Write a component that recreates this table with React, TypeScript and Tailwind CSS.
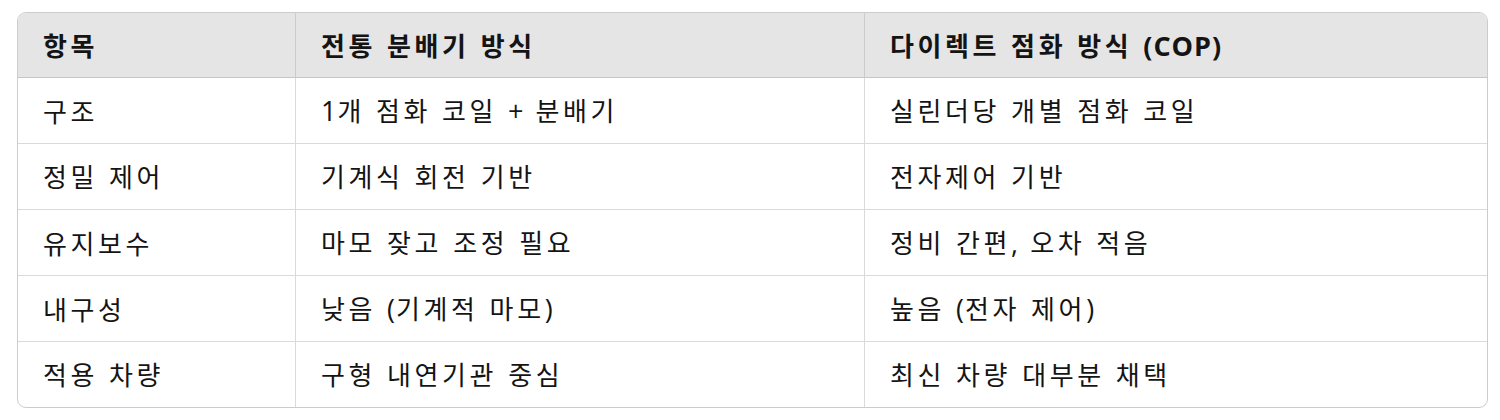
import React from "react";

const rows: [string, string, string][] = [
  ["구조", "1개 점화 코일 + 분배기", "실린더당 개별 점화 코일"],
  ["정밀 제어", "기계식 회전 기반", "전자제어 기반"],
  ["유지보수", "마모 잦고 조정 필요", "정비 간편, 오차 적음"],
  ["내구성", "낮음 (기계적 마모)", "높음 (전자 제어)"],
  ["적용 차량", "구형 내연기관 중심", "최신 차량 대부분 채택"],
];

const headers = ["항목", "전통 분배기 방식", "다이렉트 점화 방식 (COP)"];

function Txt({ s }: { s: string }) {
  const parts = s.split(/([\uAC00-\uD7A3\u3131-\u318E]+)/).filter((p) => p.length > 0);
  return (
    <span className="whitespace-pre">
      {parts.map((p, i) =>
        /[\uAC00-\uD7A3]/.test(p) ? (
          <span key={i} className="text-[26px] tracking-[3.6px]" style={{ fontFamily: '"Noto Sans CJK KR", sans-serif' }}>
            {p}
          </span>
        ) : (
          <span key={i} className="text-[27px] tracking-[1px] [word-spacing:3px]" style={{ fontFamily: '"Open Sans", sans-serif' }}>
            {p}
          </span>
        )
      )}
    </span>
  );
}

const cols = "grid grid-cols-[278px_569px_622px]";

export default function App() {
  return (
    <div className="w-[1500px] h-[420px] bg-white pt-[12px] pl-[17px]">
      <div className="w-[1471px] border border-[#cccccc] rounded-[9px] overflow-hidden text-[#141414]">
        <div className={`${cols} h-[65px] bg-[#e5e5e5] border-b border-[#c6c6c6] font-bold`}>
          {headers.map((h, i) => (
            <div key={i} className={`flex items-center pl-[25px] leading-none ${i < 2 ? "border-r border-[#cccccc]" : ""}`}>
              <Txt s={h} />
            </div>
          ))}
        </div>
        {rows.map((r, i) => (
          <div
            key={i}
            className={`${cols} ${i < rows.length - 1 ? "h-[66px] border-b border-[#dadada]" : "h-[65px]"}`}
          >
            {r.map((c, j) => (
              <div key={j} className={`flex items-center pl-[25px] leading-none ${j < 2 ? "border-r border-[#dadada]" : ""}`}>
                <Txt s={c} />
              </div>
            ))}
          </div>
        ))}
      </div>
    </div>
  );
}
